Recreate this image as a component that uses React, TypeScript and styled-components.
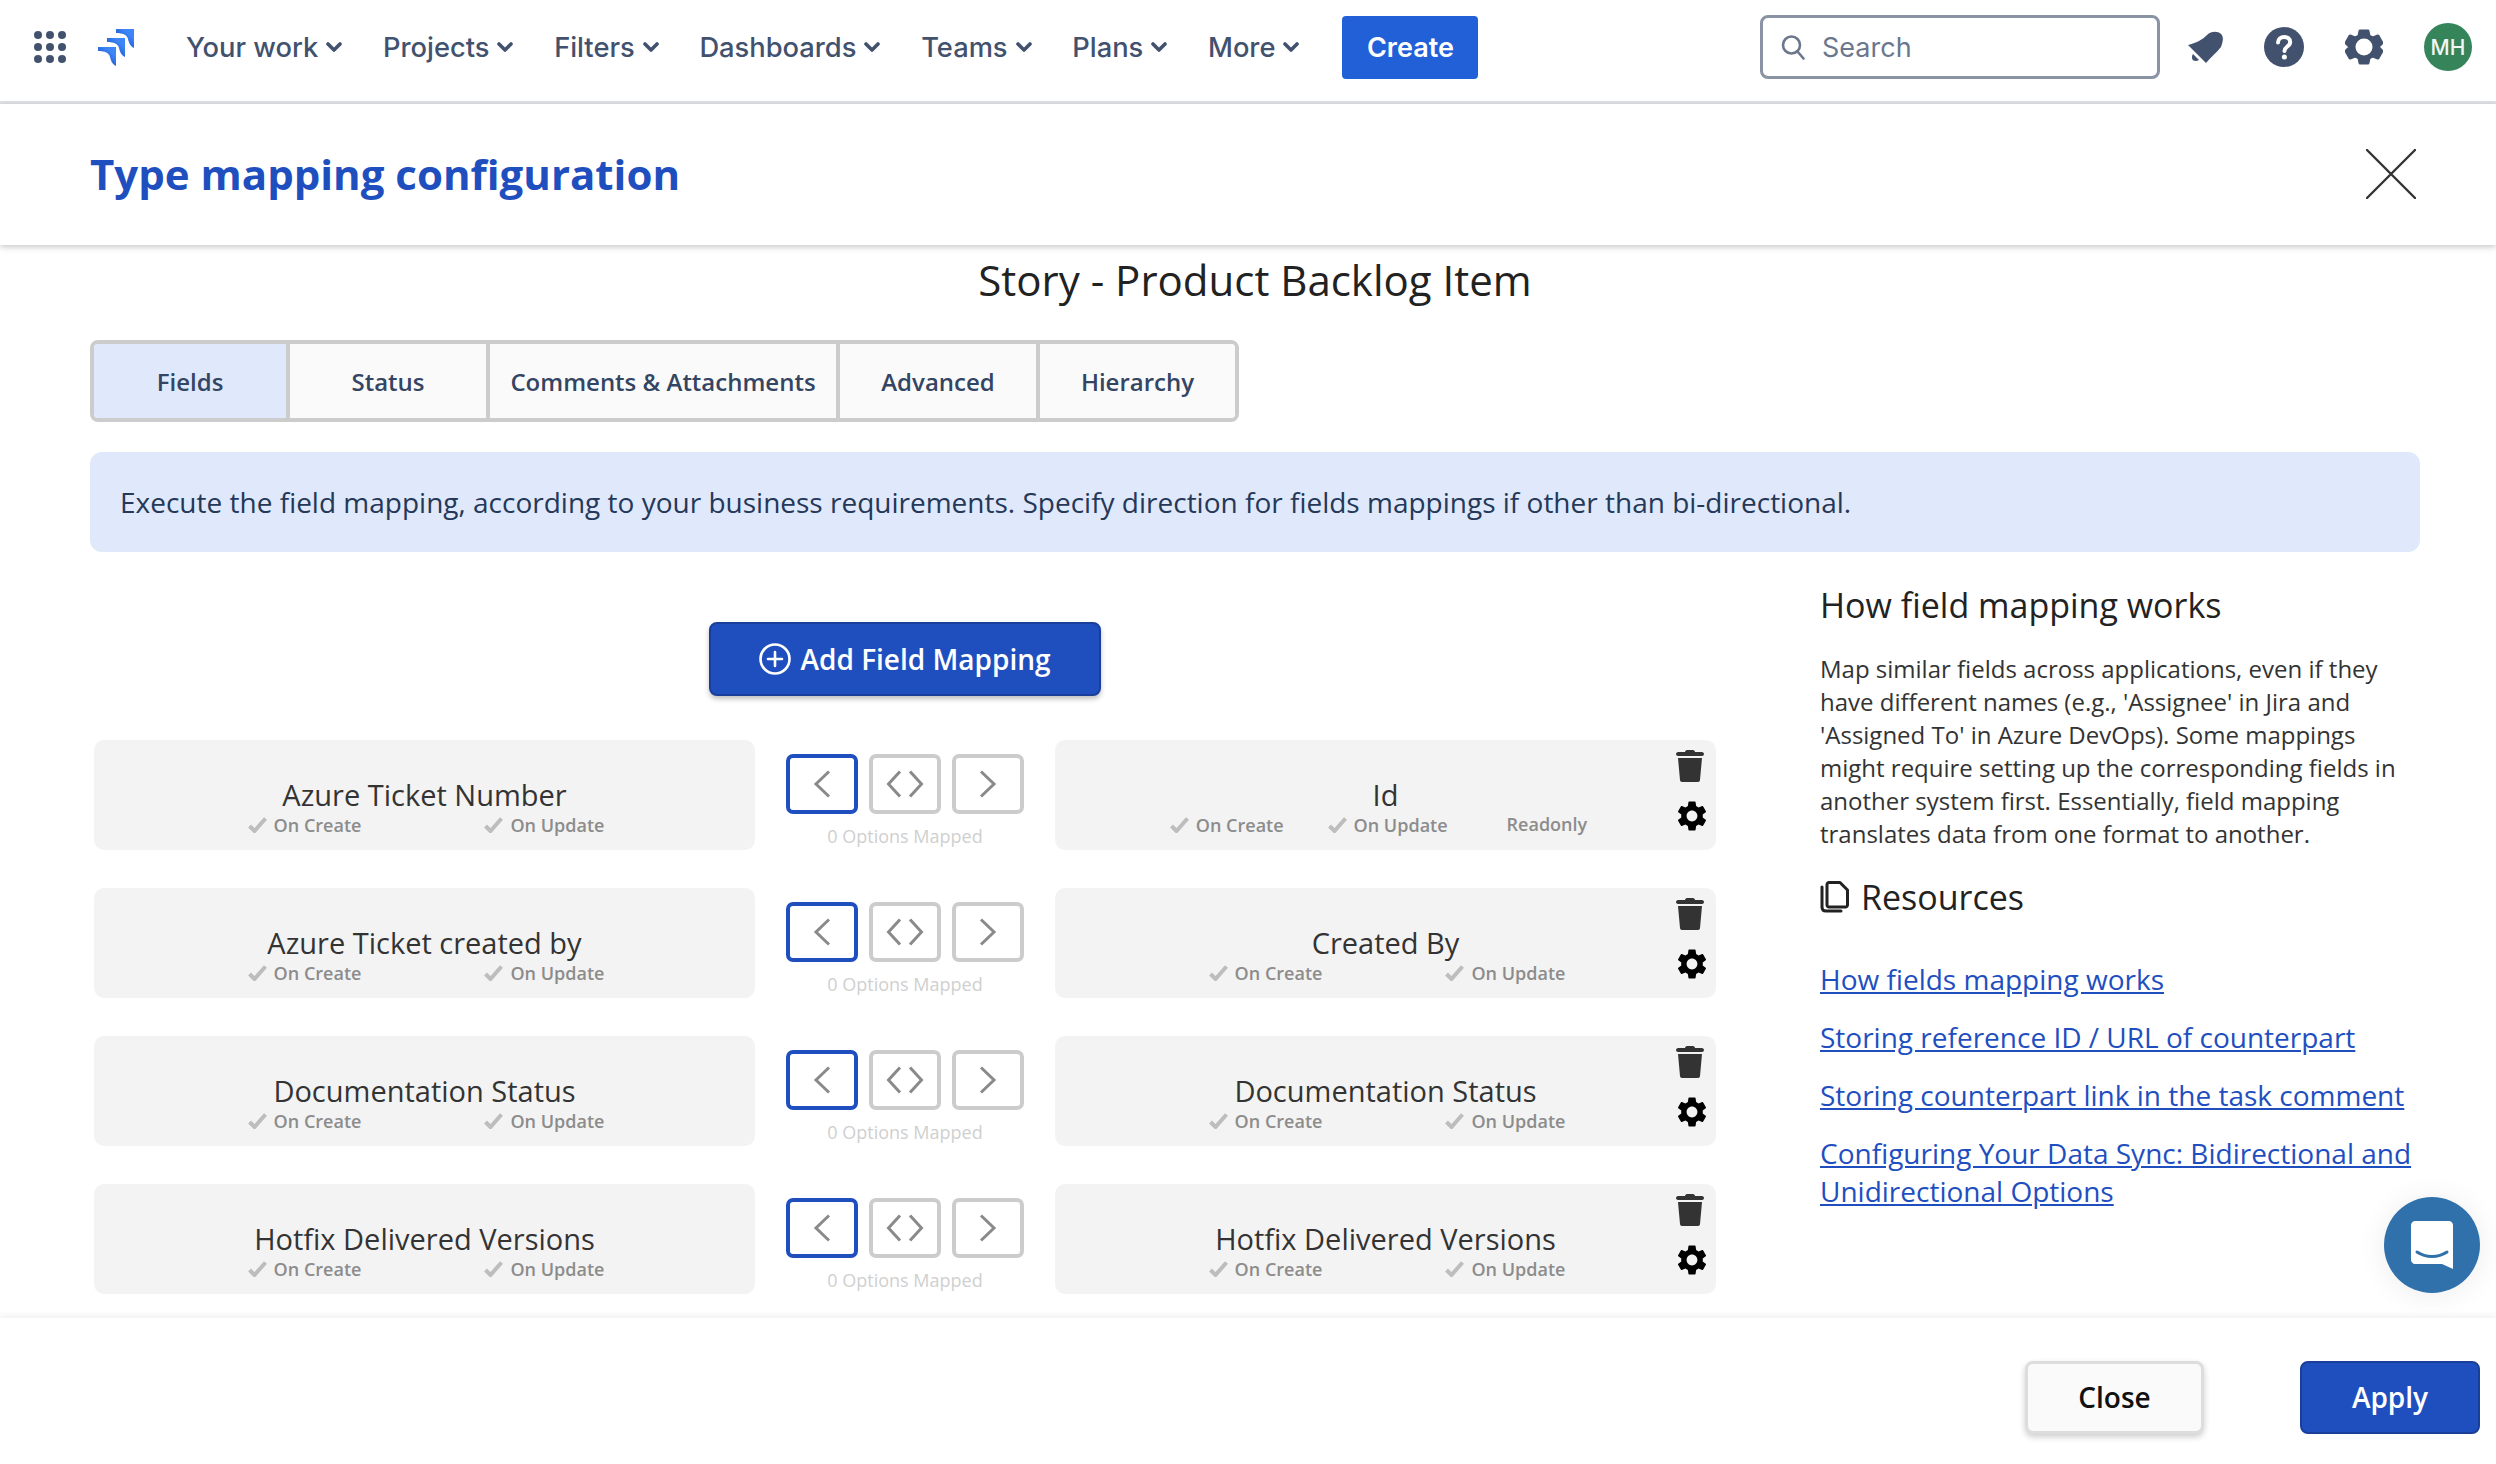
import { type FC } from "react";
import styled, { createGlobalStyle } from "styled-components";
import { MdSettings } from "react-icons/md";

const GlobalStyle = createGlobalStyle`
  html, body {
    margin: 0;
    padding: 0;
    background: #fff;
  }
  * {
    box-sizing: border-box;
  }
`;

const Page = styled.div`
  position: relative;
  display: flex;
  flex-direction: column;
  width: 2496px;
  height: 1464px;
  overflow: hidden;
  background: #fff;
  font-family: "Open Sans", sans-serif;
`;

const Nav = styled.nav`
  display: flex;
  align-items: center;
  flex: none;
  height: 104px;
  padding: 0 24px 7px 34px;
  border-bottom: 3px solid #dfe1e6;
  font-family: Inter, sans-serif;
`;

const AppGrid = styled.div`
  display: grid;
  grid-template-columns: repeat(3, 8px);
  gap: 4px;
  margin-right: 32px;
  span {
    width: 8px;
    height: 8px;
    border-radius: 50%;
    background: #42526e;
  }
`;

const NavItems = styled.div`
  display: flex;
  align-items: center;
  gap: 40.7px;
  margin-left: 52px;
`;

const NavItem = styled.div`
  display: flex;
  align-items: center;
  gap: 8px;
  color: #42526e;
  font-size: 27.3px;
  font-weight: 500;
  white-space: nowrap;
`;

const CreateButton = styled.div`
  display: flex;
  align-items: center;
  justify-content: center;
  width: 136px;
  height: 63px;
  margin-left: 43px;
  border-radius: 4px;
  background: #2260d8;
  color: #fff;
  font-size: 27px;
  font-weight: 600;
`;

const NavRight = styled.div`
  display: flex;
  align-items: center;
  margin-left: auto;
`;

const Search = styled.div`
  display: flex;
  align-items: center;
  gap: 17px;
  width: 400px;
  height: 64px;
  padding: 0 18px;
  border: 3px solid #8993a4;
  border-radius: 8px;
  color: #6b778c;
  font-size: 27px;
`;

const NavIcon = styled.div<{ $gap: number }>`
  display: flex;
  align-items: center;
  justify-content: center;
  width: 40px;
  margin-left: ${({ $gap }) => $gap}px;
  color: #42526e;
`;

const Avatar = styled.div`
  display: flex;
  align-items: center;
  justify-content: center;
  width: 48px;
  height: 48px;
  margin-left: 40px;
  border-radius: 50%;
  background: #36845a;
  color: #f2f6f3;
  font-size: 21px;
  font-weight: 500;
`;

const Header = styled.header`
  position: relative;
  z-index: 2;
  display: flex;
  align-items: center;
  justify-content: space-between;
  flex: none;
  height: 141px;
  padding: 0 80px 2px 90px;
  background: #fff;
  box-shadow: 0 2px 6px rgba(0, 0, 0, 0.22);
`;

const Title = styled.h1`
  margin: 0;
  color: #1f4fbf;
  font-size: 42px;
  font-weight: 700;
`;

const Body = styled.main`
  flex: 1;
  min-height: 0;
  padding: 0 76px 0 90px;
  overflow: hidden;
`;

const SubTitle = styled.h2`
  margin: 0;
  padding-top: 5px;
  height: 95px;
  color: #222;
  font-size: 42px;
  font-weight: 400;
  line-height: 60px;
  text-align: center;
`;

const Tabs = styled.div`
  display: flex;
  width: max-content;
  border: 4px solid #ccc;
  border-radius: 8px;
  overflow: hidden;
`;

const Tab = styled.div<{ $active?: boolean; $width: number }>`
  display: flex;
  align-items: center;
  justify-content: center;
  width: ${({ $width }) => $width}px;
  height: 74px;
  background: ${({ $active }) => ($active ? "#dfe9fb" : "#fafafa")};
  color: #344563;
  font-size: 24px;
  font-weight: 600;
  & + & {
    border-left: 4px solid #ccc;
  }
`;

const Banner = styled.div`
  display: flex;
  align-items: center;
  height: 100px;
  margin-top: 30px;
  padding: 0 30px;
  border-radius: 12px;
  background: #dfe9fb;
  color: #253858;
  font-size: 28px;
`;

const Columns = styled.div`
  display: flex;
  justify-content: space-between;
  margin-top: 29px;
`;

const MappingColumn = styled.section`
  display: flex;
  flex-direction: column;
  width: 1626px;
  padding: 41px 0 0 4px;
`;

const AddButton = styled.div`
  display: flex;
  align-items: center;
  justify-content: center;
  align-self: center;
  gap: 9px;
  width: 392px;
  height: 74px;
  margin-bottom: 44px;
  border: 2px solid #193f9b;
  border-radius: 8px;
  background: #1f4fbf;
  box-shadow: 0 3px 5px rgba(0, 0, 0, 0.25);
  color: #fff;
  font-size: 28px;
  font-weight: 600;
`;

const Rows = styled.div`
  display: flex;
  flex-direction: column;
  gap: 38px;
`;

const Row = styled.div`
  display: flex;
  height: 110px;
`;

const FieldCard = styled.div`
  position: relative;
  display: flex;
  flex-direction: column;
  align-items: center;
  width: 661px;
  padding-top: 36px;
  border-radius: 10px;
  background: #f3f3f3;
`;

const FieldName = styled.div`
  color: #333;
  font-size: 29px;
  font-weight: 500;
  line-height: 38px;
`;

const Options = styled.div<{ $gap: number }>`
  display: flex;
  align-items: center;
  gap: ${({ $gap }) => $gap}px;
  margin-top: -2px;
  padding-left: 3px;
`;

const Option = styled.div`
  display: flex;
  align-items: center;
  gap: 7px;
  color: #8c8c8c;
  font-size: 18px;
  font-weight: 600;
  line-height: 26px;
`;

const Readonly = styled.div`
  margin: -3px 17px 0 15px;
  color: #8c8c8c;
  font-size: 18px;
  font-weight: 600;
`;

const Actions = styled.div`
  position: absolute;
  top: 10px;
  right: 8px;
  display: flex;
  flex-direction: column;
  align-items: center;
  gap: 19px;
  width: 32px;
`;

const TrashWrap = styled.div`
  display: flex;
  margin-right: 4px;
`;

const CardGear = styled(MdSettings)`
  margin: -3px 0;
  color: #000;
`;

const Direction = styled.div`
  display: flex;
  flex-direction: column;
  align-items: center;
  width: 300px;
  padding-top: 14px;
`;

const DirectionButtons = styled.div`
  display: flex;
  gap: 11px;
`;

const DirectionButton = styled.div<{ $active?: boolean }>`
  display: flex;
  align-items: center;
  justify-content: center;
  width: 72px;
  height: 60px;
  border: 4px solid ${({ $active }) => ($active ? "#1f4fbf" : "#ccc")};
  border-radius: 7px;
  background: #fff;
  color: #8a8a8a;
`;

const MappedCount = styled.div`
  margin-top: 9px;
  color: #cfcfcf;
  font-size: 18px;
  line-height: 26px;
`;

const Aside = styled.aside`
  width: 600px;
  margin-top: -1px;
`;

const AsideHeading = styled.h3`
  display: flex;
  align-items: center;
  gap: 11px;
  margin: 0;
  color: #222;
  font-size: 34px;
  font-weight: 400;
  line-height: 50px;
`;

const AsideText = styled.p`
  margin: 22px 0 22px;
  color: #333;
  font-size: 24px;
  line-height: 33px;
`;

const ResourceLinks = styled.div`
  display: flex;
  flex-direction: column;
  gap: 20px;
  margin-top: 38px;
`;

const ResourceLink = styled.a`
  color: #1f4fbf;
  font-size: 28px;
  line-height: 38px;
  text-decoration: underline;
`;

const Footer = styled.footer`
  position: relative;
  z-index: 2;
  display: flex;
  align-items: center;
  justify-content: flex-end;
  gap: 96px;
  flex: none;
  height: 146px;
  padding: 12px 16px 0 0;
  background: #fff;
  box-shadow: 0 -3px 6px rgba(0, 0, 0, 0.05);
`;

const CloseButton = styled.div`
  display: flex;
  align-items: center;
  justify-content: center;
  width: 179px;
  height: 73px;
  border: 3px solid #ddd;
  border-radius: 8px;
  background: #fafafa;
  box-shadow: 0 3px 6px rgba(0, 0, 0, 0.2);
  color: #111;
  font-size: 28px;
  font-weight: 600;
`;

const ApplyButton = styled.div`
  display: flex;
  align-items: center;
  justify-content: center;
  width: 180px;
  height: 73px;
  border: 2px solid #193f9b;
  border-radius: 8px;
  background: #1f4fbf;
  color: #fff;
  font-size: 28px;
  font-weight: 600;
`;

const ChatBubble = styled.div`
  position: absolute;
  top: 1197px;
  left: 2384px;
  z-index: 3;
  display: flex;
  align-items: center;
  justify-content: center;
  width: 96px;
  height: 96px;
  border-radius: 50%;
  background: #3071ab;
  box-shadow: 0 2px 30px rgba(0, 0, 0, 0.08);
`;

const Chevron: FC = () => (
  <svg width="16" height="10" viewBox="0 0 16 10" fill="none">
    <path d="M2 2l6 6 6-6" stroke="currentColor" strokeWidth="3.6" strokeLinecap="round" strokeLinejoin="round" />
  </svg>
);

const logoPiece = "M0 0H18V19C14 17 13 14 12 10C11 6 7 4 0 4Z";

const Logo: FC = () => (
  <svg width="36" height="37" viewBox="0 0 36 37">
    <defs>
      <linearGradient id="piece" x1="1" y1="0" x2="0.3" y2="0.8">
        <stop offset="0.35" stopColor="#3d86f8" />
        <stop offset="1" stopColor="#1c53c4" />
      </linearGradient>
    </defs>
    <path transform="translate(0 18)" d={logoPiece} fill="url(#piece)" />
    <path transform="translate(9 9)" d={logoPiece} fill="url(#piece)" />
    <path transform="translate(18 0)" d={logoPiece} fill="url(#piece)" />
  </svg>
);

const SearchIcon: FC = () => (
  <svg width="24" height="26" viewBox="0 0 24 26" fill="none">
    <circle cx="10.5" cy="11" r="8.5" stroke="currentColor" strokeWidth="2.6" />
    <path d="M16.5 17.5l6 7" stroke="currentColor" strokeWidth="2.6" strokeLinecap="round" />
  </svg>
);

const BellIcon: FC = () => (
  <svg width="35" height="33" viewBox="0 0 35 33" fill="currentColor">
    <path d="M0 14C8 12 14 9 19 4C23 0 30 0 33 3C36 6 35 11 33 16C29 21 24 25 18 32Z" />
    <path d="M5 23L11 29C8 31 4 30 4 27C4 26 4 24 5 23Z" />
  </svg>
);

const HelpIcon: FC = () => (
  <svg width="40" height="40" viewBox="0 0 40 40">
    <circle cx="20" cy="20" r="20" fill="currentColor" />
    <path d="M14 15.5c0-3.500 2.700-5.500 6.200-5.500 3.500 0 6 2 6 5 0 4.500-5.700 4.600-5.700 9" fill="none" stroke="#fff" strokeWidth="4" strokeLinecap="round" />
    <circle cx="20.400" cy="30" r="2.500" fill="#fff" />
  </svg>
);

const NavGear: FC = () => (
  <svg width="38" height="36" viewBox="0 0 38 36" fill="none">
    <path
      d="M15 2h8l1 5 4 2 5-2 4 7-4 4 0 0 4 4-4 7-5-2-4 2-1 5h-8l-1-5-4-2-5 2-4-7 4-4-4-4 4-7 5 2 4-2z"
      stroke="currentColor"
      strokeWidth="3"
      strokeLinejoin="round"
      fill="currentColor"
    />
    <circle cx="19" cy="18" r="8.500" fill="#fff" />
  </svg>
);

const CloseIcon: FC = () => (
  <svg width="50" height="50" viewBox="0 0 50 50" fill="none">
    <path d="M1 1l48 48M49 1L1 49" stroke="#333" strokeWidth="2.4" strokeLinecap="round" />
  </svg>
);

const PlusCircle: FC = () => (
  <svg width="32" height="32" viewBox="0 0 32 32" fill="none">
    <circle cx="16" cy="16" r="14.500" stroke="#fff" strokeWidth="2.600" />
    <path d="M16 9v14M9 16h14" stroke="#fff" strokeWidth="2.600" strokeLinecap="round" />
  </svg>
);

const Check: FC = () => (
  <svg width="19" height="16" viewBox="0 0 19 16" fill="none">
    <path d="M1.500 9l5 5L17.500 1.500" stroke="#bdbdbd" strokeWidth="4" />
  </svg>
);

const TrashIcon: FC = () => (
  <svg width="28" height="32" viewBox="0 0 28 32" fill="#333">
    <path d="M9 2c0-1 1-2 2-2h6c1 0 2 1 2 2h7c1 0 2 1 2 2s-1 2-2 2H2C1 6 0 5 0 4s1-2 2-2z" />
    <path d="M2 8h24l-2 22c0 1-1 2-2 2H6c-1 0-2-1-2-2z" />
  </svg>
);

const ArrowLeft: FC = () => (
  <svg width="18" height="28" viewBox="0 0 18 28" fill="none">
    <path d="M16 1.500L3 14l13 12.500" stroke="currentColor" strokeWidth="3" />
  </svg>
);

const ArrowRight: FC = () => (
  <svg width="18" height="28" viewBox="0 0 18 28" fill="none">
    <path d="M2 1.500L15 14 2 26.500" stroke="currentColor" strokeWidth="3" />
  </svg>
);

const ArrowBoth: FC = () => (
  <svg width="38" height="28" viewBox="0 0 38 28" fill="none">
    <path d="M14 1.500L2.500 14 14 26.500M24 1.500L35.500 14 24 26.500" stroke="currentColor" strokeWidth="3" />
  </svg>
);

const CopyIcon: FC = () => (
  <svg width="30" height="32" viewBox="0 0 30 32" fill="none">
    <path d="M2 6v20c0 2.500 1.500 4 4 4h15" stroke="#222" strokeWidth="3" strokeLinecap="round" />
    <path d="M9 1.500h11l7.500 7.500v15c0 1-1 2-2 2H9c-1 0-2-1-2-2V3.500c0-1 1-2 2-2z" stroke="#222" strokeWidth="3" strokeLinejoin="round" />
  </svg>
);

const ChatIcon: FC = () => (
  <svg width="42" height="48" viewBox="0 0 42 48">
    <path d="M4 0h34c2 0 4 2 4 4v44l-11-5H4c-2 0-4-2-4-4V4c0-2 2-4 4-4z" fill="#fff" />
    <path d="M6 31c9 6 21 6 30 0" fill="none" stroke="#3071ab" strokeWidth="3" strokeLinecap="round" />
  </svg>
);

const navItems = ["Your work", "Projects", "Filters", "Dashboards", "Teams", "Plans", "More"];
const tabs = [
  { label: "Fields", width: 192 },
  { label: "Status", width: 200 },
  { label: "Comments & Attachments", width: 350 },
  { label: "Advanced", width: 200 },
  { label: "Hierarchy", width: 199 },
];
const mappings = [
  { left: "Azure Ticket Number", right: "Id", readonly: true },
  { left: "Azure Ticket created by", right: "Created By" },
  { left: "Documentation Status", right: "Documentation Status" },
  { left: "Hotfix Delivered Versions", right: "Hotfix Delivered Versions" },
];
const links = [
  "How fields mapping works",
  "Storing reference ID / URL of counterpart",
  "Storing counterpart link in the task comment",
  "Configuring Your Data Sync: Bidirectional and Unidirectional Options",
];

const Field: FC<{ name: string; readonly?: boolean; actions?: boolean }> = ({ name, readonly, actions }) => (
  <FieldCard>
    <FieldName>{name}</FieldName>
    <Options $gap={readonly ? 44 : 123}>
      <Option>
        <Check />
        On Create
      </Option>
      <Option>
        <Check />
        On Update
      </Option>
      {readonly && <Readonly>Readonly</Readonly>}
    </Options>
    {actions && (
      <Actions>
        <TrashWrap>
          <TrashIcon />
        </TrashWrap>
        <CardGear size={36} />
      </Actions>
    )}
  </FieldCard>
);

const App: FC = () => {
  return (
    <Page>
      <GlobalStyle />
      <Nav>
        <AppGrid>
          {Array.from({ length: 9 }).map((_, i) => (
            <span key={i} />
          ))}
        </AppGrid>
        <Logo />
        <NavItems>
          {navItems.map((item) => (
            <NavItem key={item}>
              {item}
              <Chevron />
            </NavItem>
          ))}
        </NavItems>
        <CreateButton>Create</CreateButton>
        <NavRight>
          <Search>
            <SearchIcon />
            Search
          </Search>
          <NavIcon $gap={25}>
            <BellIcon />
          </NavIcon>
          <NavIcon $gap={39}>
            <HelpIcon />
          </NavIcon>
          <NavIcon $gap={40}>
            <NavGear />
          </NavIcon>
          <Avatar>MH</Avatar>
        </NavRight>
      </Nav>
      <Header>
        <Title>Type mapping configuration</Title>
        <CloseIcon />
      </Header>
      <Body>
        <SubTitle>Story - Product Backlog Item</SubTitle>
        <Tabs>
          {tabs.map((tab, i) => (
            <Tab key={tab.label} $active={i === 0} $width={tab.width}>
              {tab.label}
            </Tab>
          ))}
        </Tabs>
        <Banner>
          Execute the field mapping, according to your business requirements. Specify direction for fields mappings if
          other than bi-directional.
        </Banner>
        <Columns>
          <MappingColumn>
            <AddButton>
              <PlusCircle />
              Add Field Mapping
            </AddButton>
            <Rows>
              {mappings.map((m) => (
                <Row key={m.left}>
                  <Field name={m.left} />
                  <Direction>
                    <DirectionButtons>
                      <DirectionButton $active>
                        <ArrowLeft />
                      </DirectionButton>
                      <DirectionButton>
                        <ArrowBoth />
                      </DirectionButton>
                      <DirectionButton>
                        <ArrowRight />
                      </DirectionButton>
                    </DirectionButtons>
                    <MappedCount>0 Options Mapped</MappedCount>
                  </Direction>
                  <Field name={m.right} readonly={m.readonly} actions />
                </Row>
              ))}
            </Rows>
          </MappingColumn>
          <Aside>
            <AsideHeading>How field mapping works</AsideHeading>
            <AsideText>
              Map similar fields across applications, even if they have different names (e.g., 'Assignee' in Jira and
              'Assigned To' in Azure DevOps). Some mappings might require setting up the corresponding fields in another
              system first. Essentially, field mapping translates data from one format to another.
            </AsideText>
            <AsideHeading>
              <CopyIcon />
              Resources
            </AsideHeading>
            <ResourceLinks>
              {links.map((link) => (
                <ResourceLink key={link}>{link}</ResourceLink>
              ))}
            </ResourceLinks>
          </Aside>
        </Columns>
      </Body>
      <Footer>
        <CloseButton>Close</CloseButton>
        <ApplyButton>Apply</ApplyButton>
      </Footer>
      <ChatBubble>
        <ChatIcon />
      </ChatBubble>
    </Page>
  );
};

export default App;
